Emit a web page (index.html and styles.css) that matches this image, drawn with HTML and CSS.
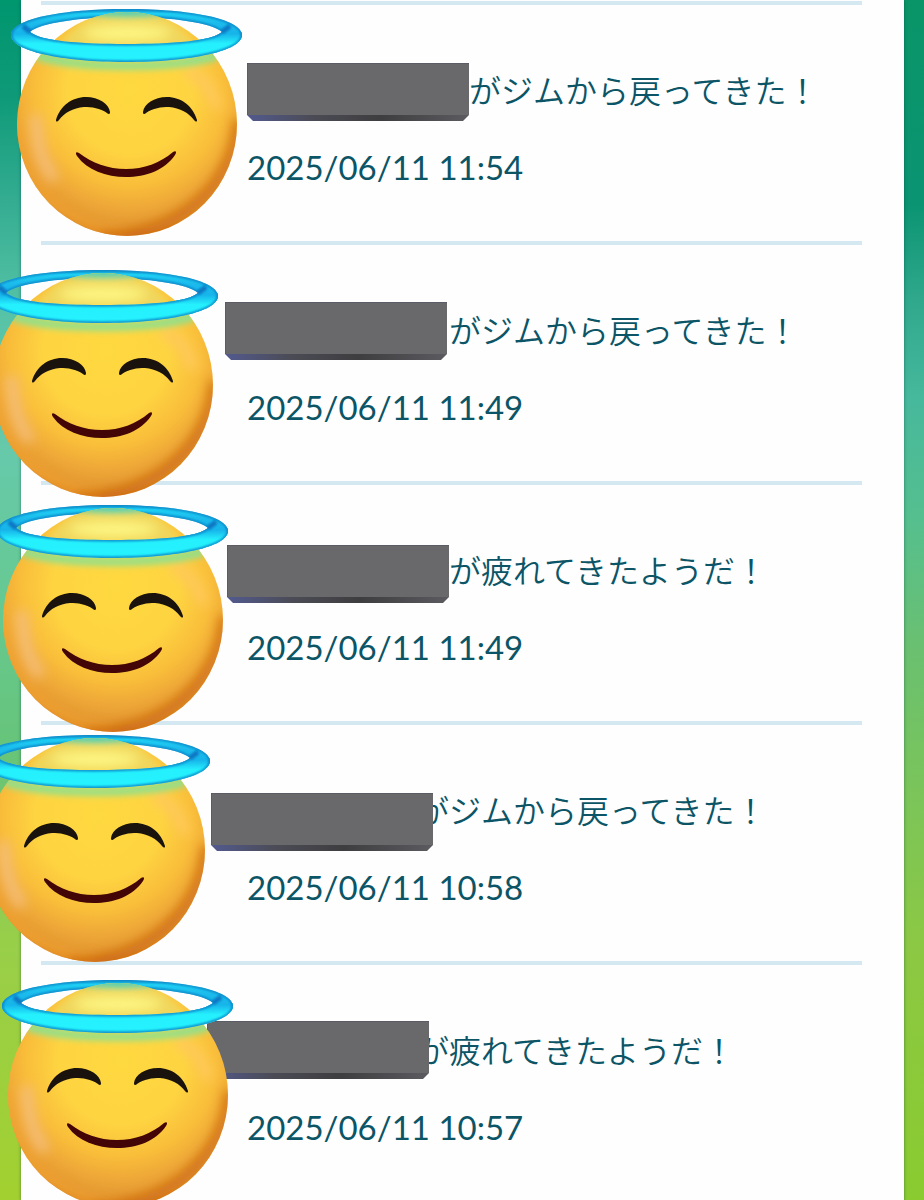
FILE: index.html
```
<!DOCTYPE html>
<html lang="ja">
<head>
    <meta charset="UTF-8">
    <meta name="viewport" content="width=device-width, initial-scale=1.0">
    <title>ジャーナル</title>
    <link rel="stylesheet" href="styles.css">
</head>
<body>
    <svg class="defs" aria-hidden="true">
        <defs>
            <radialGradient id="faceFill" gradientUnits="userSpaceOnUse" cx="130" cy="90" r="150">
                <stop offset="0" stop-color="#ffd940"/>
                <stop offset="0.42" stop-color="#fed441"/>
                <stop offset="0.64" stop-color="#f9bd3a"/>
                <stop offset="0.8" stop-color="#eda637"/>
                <stop offset="0.92" stop-color="#e39630"/>
                <stop offset="1" stop-color="#cf6c14"/>
            </radialGradient>
            <linearGradient id="haloFill" gradientUnits="userSpaceOnUse" x1="0" y1="8" x2="0" y2="62">
                <stop offset="0" stop-color="#0d93cf"/>
                <stop offset="0.1" stop-color="#1fd0f4"/>
                <stop offset="0.28" stop-color="#1cbbec"/>
                <stop offset="0.48" stop-color="#16b4ea"/>
                <stop offset="0.66" stop-color="#25f0fd"/>
                <stop offset="1" stop-color="#25f3ff"/>
            </linearGradient>
            <filter id="blur1" filterUnits="userSpaceOnUse" x="0" y="0" width="260" height="250"><feGaussianBlur stdDeviation="1"/></filter>
            <filter id="blur2" filterUnits="userSpaceOnUse" x="0" y="0" width="260" height="250"><feGaussianBlur stdDeviation="3"/></filter>
            <filter id="blur6" filterUnits="userSpaceOnUse" x="-20" y="-20" width="300" height="290"><feGaussianBlur stdDeviation="6"/></filter>
            <clipPath id="faceClip"><ellipse cx="127" cy="124" rx="110" ry="112"/></clipPath>
            <clipPath id="ringClip">
                <path clip-rule="evenodd" d="M11 35C11 19 62 9 126 9C191 9 242 19 242 35C242 51 191 62 126 62C62 62 11 51 11 35ZM30 32C40 41 80 44 126 44C173 44 212 41 222 32C212 23 173 17 126 17C80 17 40 23 30 32Z"/>
            </clipPath>
            <clipPath id="frontClip"><rect x="0" y="32" width="260" height="40"/></clipPath>
            <g id="ring" clip-path="url(#ringClip)">
                <rect x="10" y="8" width="234" height="55" fill="url(#haloFill)"/>
                <g fill="none" stroke="#0b86c8" filter="url(#blur1)">
                    <path d="M11 35C11 19 62 9 126 9C191 9 242 19 242 35C242 51 191 62 126 62C62 62 11 51 11 35Z" stroke-width="3"/>
                    <path d="M30 32C40 41 80 44 126 44C173 44 212 41 222 32C212 23 173 17 126 17C80 17 40 23 30 32Z" stroke-width="3"/>
                    <path d="M30 32L23 26M222 32L230 26" stroke-width="5" stroke="#0b78c4"/>
                </g>
            </g>
            <symbol id="angel" viewBox="11 8 232 230">
                <use href="#ring"/>
                <g clip-path="url(#faceClip)">
                    <rect x="10" y="10" width="235" height="230" fill="url(#faceFill)"/>
                    <path d="M17 120C18 175 60 232 127 236" fill="none" stroke="#f3a42e" stroke-width="8" filter="url(#blur6)"/>
                    <path d="M36 120C38 148 42 162 52 176" fill="none" stroke="#f5bd77" stroke-width="12" stroke-linecap="round" filter="url(#blur6)"/>
                    <path d="M238 120C236 175 190 234 100 238" fill="none" stroke="#c9620e" stroke-width="8" filter="url(#blur6)"/>
                    <path d="M190 72C204 78 210 88 216 104" fill="none" stroke="#ffc95a" stroke-width="12" stroke-linecap="round" filter="url(#blur6)"/>
                    <path d="M36 50C76 66 178 66 218 50L218 60C178 73 76 73 36 60Z" fill="#8fe08c" filter="url(#blur2)"/>
                    <path d="M64 40C80 18 110 10 127 10C145 10 174 18 190 40L190 45H64Z" fill="#f0d65c" filter="url(#blur2)"/>
                    <ellipse cx="127" cy="12" rx="40" ry="5" fill="#50d0b8" filter="url(#blur2)"/>
                    <ellipse cx="127" cy="33" rx="44" ry="8" fill="#fdf682" filter="url(#blur6)"/>
                </g>
                <g clip-path="url(#frontClip)"><use href="#ring"/></g>
                <g fill="#1a120c">
                    <path d="M56 120C60 106 72 97 86 97C99 97 109 104 110 112C110 115 108 114 107 113C100 108 92 107 84 107C73 108 64 113 59 120C57 122 56 122 56 120Z"/>
                    <path d="M197 120C193 106 181 97 167 97C154 97 144 104 143 112C143 115 145 114 146 113C153 108 161 107 169 107C180 108 189 113 194 120C196 122 197 122 197 120Z"/>
                </g>
                <path d="M79 153C92 163 108 169 126 169C144 169 160 163 173 152C176 150 177 152 175 155C165 170 146 177 126 177C106 177 87 170 77 156C75 153 76 151 79 153Z" fill="#430505"/>
            </symbol>
            <linearGradient id="barEdge">
                <stop offset="0" stop-color="#525a8e"/>
                <stop offset="0.3" stop-color="#4b4b55"/>
                <stop offset="0.6" stop-color="#3e3e40"/>
                <stop offset="1" stop-color="#5b5b60"/>
            </linearGradient>
            <symbol id="bar" viewBox="0 0 222 58">
                <path d="M0 0H222V52L216 58H6L0 52Z" fill="url(#barEdge)"/>
                <path d="M0 0H222V52H0Z" fill="#69696b"/>
                <path d="M0 52V0H222" fill="none" stroke="#515164"/>
            </symbol>
        </defs>
    </svg>

    <main class="journal">
        <ul class="log">
            <li class="entry entry-1">
                <p class="message"><span class="name"></span>がジムから戻ってきた！</p>
                <time class="date">2025/06/11 11:54</time>
                <svg class="bar"><use href="#bar"/></svg>
                <svg class="angel"><use href="#angel"/></svg>
            </li>
            <li class="entry entry-2">
                <p class="message"><span class="name"></span>がジムから戻ってきた！</p>
                <time class="date">2025/06/11 11:49</time>
                <svg class="bar"><use href="#bar"/></svg>
                <svg class="angel"><use href="#angel"/></svg>
            </li>
            <li class="entry entry-3">
                <p class="message"><span class="name"></span>が疲れてきたようだ！</p>
                <time class="date">2025/06/11 11:49</time>
                <svg class="bar"><use href="#bar"/></svg>
                <svg class="angel"><use href="#angel"/></svg>
            </li>
            <li class="entry entry-4">
                <p class="message"><span class="name"></span>がジムから戻ってきた！</p>
                <time class="date">2025/06/11 10:58</time>
                <svg class="bar"><use href="#bar"/></svg>
                <svg class="angel"><use href="#angel"/></svg>
            </li>
            <li class="entry entry-5">
                <p class="message"><span class="name"></span>が疲れてきたようだ！</p>
                <time class="date">2025/06/11 10:57</time>
                <svg class="bar"><use href="#bar"/></svg>
                <svg class="angel"><use href="#angel"/></svg>
            </li>
        </ul>
    </main>
</body>
</html>
```
FILE: styles.css
```
* {
    box-sizing: border-box;
}

body {
    margin: 0;
    padding: 0 20px 0 21px;
    overflow-x: hidden;
    font-family: Lato, "Noto Sans CJK JP", sans-serif;
    color: #0b5566;
    background:
        linear-gradient(#00966e 0%, #0e9a78 8%, #35ad92 17%, #57c3a6 26%, #66c9aa 38%, #66c992 50%, #66c47a 62%, #7ec860 71%, #98cf4a 78%, #a2d030 100%) left top / 50% 100% no-repeat,
        linear-gradient(#0a9568 0%, #0a9472 17%, #30a88c 25%, #46b89c 33%, #55bf8f 43%, #6ac070 54%, #7cc558 67%, #8cc843 79%, #8acb30 100%) right top / 50% 100% no-repeat;
}

.defs {
    position: absolute;
    width: 0;
    height: 0;
}

.journal {
    padding: 1px 42px 0 20px;
    background: #fefefe;
    box-shadow: 0 0 3px rgba(0, 60, 60, 0.5);
}

.log {
    margin: 0;
    padding: 0;
    list-style: none;
}

.entry {
    position: relative;
    height: 240px;
    padding: 62px 0 0 206px;
    border-top: 4px solid #d3e8f0;
}

.message,
.date {
    display: block;
    margin: 0;
    line-height: 48px;
    white-space: nowrap;
}

.message {
    margin-bottom: 28px;
    font-size: 32px;
    font-weight: 350;
}

.date {
    font-size: 33px;
}

/* hidden trainer name, keeps its room in the line */
.name {
    display: inline-block;
    width: 202px;
}

.entry-1 .name {
    width: 222px;
}

.entry-4 .name,
.entry-5 .name {
    width: 170px;
}

/* stickers lie over the list */
.bar,
.angel {
    position: absolute;
    z-index: 1;
    pointer-events: none;
}

.bar {
    width: 222px;
    height: 58px;
}

.angel {
    width: 232px;
    height: 230px;
}

.entry-1 .bar { left: 206px; top: 58px; }
.entry-2 .bar { left: 184px; top: 57px; }
.entry-3 .bar { left: 186px; top: 60px; }
.entry-4 .bar { left: 170px; top: 68px; }
.entry-5 .bar { left: 166px; top: 56px; }

.entry-1 .angel { left: -30px; top: 3px; }
.entry-2 .angel { left: -54px; top: 24px; }
.entry-3 .angel { left: -44px; top: 19px; }
.entry-4 .angel { left: -62px; top: 9px; }
.entry-5 .angel { left: -39px; top: 14px; }
```
